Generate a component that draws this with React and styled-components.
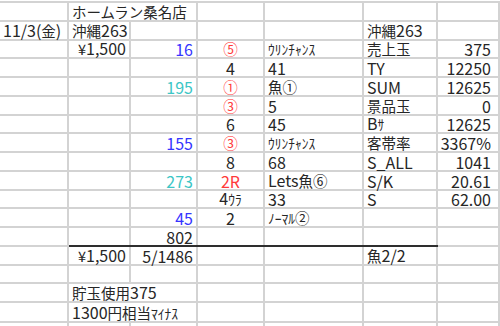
import React from 'react'
import styled, { createGlobalStyle } from 'styled-components'

const GlobalStyle = createGlobalStyle`
  body {
    margin: 0;
    background: #FFFFFF;
  }
`

// cell sizes without the 2px grid lines, which come from the sheet's gaps
const widths = [67, 60, 65, 65, 97, 72, 60]
const heights = [17, 17, 16, 17, 17, 17, 16, 17, 17, 17, 16, 17, 17, 17, 16, 17, 18, 10]

const BLUE = '#3535FF'
const CYAN = '#3CC6C6'
const RED = '#FF3A3A'
const LINE = '#D3D3D3'
const RULE = '#2E2E2E'

const Sheet = styled.div`
  display: grid;
  grid-template-columns: ${widths.map(w => w + 'px').join(' ')};
  grid-template-rows: ${heights.map(h => h + 'px').join(' ')};
  gap: 2px;
  margin-top: 1px;
  padding: 2px 2px 0 0;
  width: 500px;
  height: 325px;
  box-sizing: border-box;
  overflow: hidden;
  background: ${LINE};
  font-family: "Liberation Sans Narrow", "Noto Sans CJK JP", sans-serif;
  font-size: 16px;
  color: #262626;
`

const Cell = styled.div`
  position: relative;
  grid-column: span ${props => props.$span || 1};
  display: flex;
  align-items: flex-end;
  justify-content: ${props => props.$align === 'right' ? 'flex-end' : props.$align === 'center' ? 'center' : 'flex-start'};
  padding: 0 ${props => props.$pr || 3}px 0 3px;
  background: #FFFFFF;
  white-space: nowrap;
  color: ${props => props.$color || '#262626'};
  line-height: 16px;

  &::after {
    content: '';
    display: ${props => props.$thick ? 'block' : 'none'};
    position: absolute;
    left: 0;
    right: -2px;
    bottom: -2px;
    height: 2px;
    background: ${RULE};
  }
`

const Text = styled.span`
  display: inline-block;
  line-height: 16px;
`

const Wide = styled.span`
  font-family: "Noto Sans CJK JP", sans-serif;
  font-size: 14.5px;
`

const Kana = styled.span`
  font-family: "Noto Sans CJK JP", sans-serif;
  font-size: 13.5px;
`

// split a label into runs of ascii, half-width kana and other wide text
function Label({ text }) {
  const runs = []
  for (const ch of text) {
    const code = ch.codePointAt(0)
    const kind = code < 0x7f ? 'a' : code >= 0xff61 && code <= 0xff9f ? 'k' : 'w'
    const last = runs[runs.length - 1]
    if (last && last.kind === kind) last.text += ch
    else runs.push({ kind, text: ch })
  }
  return (
    <Text>
      {runs.map((run, i) => run.kind === 'a'
        ? <React.Fragment key={i}>{run.text}</React.Fragment>
        : run.kind === 'k'
          ? <Kana key={i}>{run.text}</Kana>
          : <Wide key={i}>{run.text}</Wide>)}
    </Text>
  )
}

// [col, text, opts]
const rows = [
  [[1, 'ホームラン桑名店', { span: 2 }]],
  [[0, '11/3(金)'], [1, '沖縄263'], [5, '沖縄263']],
  [[1, '¥1,500', { align: 'right' }], [2, '16', { align: 'right', color: BLUE }], [3, '⑤', { align: 'center', color: RED }], [4, 'ｳﾘﾝﾁｬﾝｽ'], [5, '売上玉'], [6, '375', { align: 'right', pr: 7 }]],
  [[3, '4', { align: 'center' }], [4, '41'], [5, 'TY'], [6, '12250', { align: 'right', pr: 7 }]],
  [[2, '195', { align: 'right', color: CYAN }], [3, '①', { align: 'center', color: RED }], [4, '魚①'], [5, 'SUM'], [6, '12625', { align: 'right', pr: 7 }]],
  [[3, '③', { align: 'center', color: RED }], [4, '5'], [5, '景品玉'], [6, '0', { align: 'right', pr: 7 }]],
  [[3, '6', { align: 'center' }], [4, '45'], [5, 'Bｻ'], [6, '12625', { align: 'right', pr: 7 }]],
  [[2, '155', { align: 'right', color: BLUE }], [3, '③', { align: 'center', color: RED }], [4, 'ｳﾘﾝﾁｬﾝｽ'], [5, '客帯率'], [6, '3367%', { align: 'right', pr: 7 }]],
  [[3, '8', { align: 'center' }], [4, '68'], [5, 'S_ALL'], [6, '1041', { align: 'right', pr: 7 }]],
  [[2, '273', { align: 'right', color: CYAN }], [3, '2R', { align: 'center', color: RED }], [4, 'Lets魚⑥'], [5, 'S/K'], [6, '20.61', { align: 'right', pr: 7 }]],
  [[3, '4ｳﾗ', { align: 'center' }], [4, '33'], [5, 'S'], [6, '62.00', { align: 'right', pr: 7 }]],
  [[2, '45', { align: 'right', color: BLUE }], [3, '2', { align: 'center' }], [4, 'ﾉｰﾏﾙ②']],
  [[2, '802', { align: 'right' }]],
  [[1, '¥1,500', { align: 'right' }], [2, '5/1486', { align: 'right' }], [5, '魚2/2']],
  [],
  [[1, '貯玉使用375', { span: 2 }]],
  [[1, '1300円相当ﾏｲﾅｽ', { span: 2 }]],
  [],
]

function buildRow(row, r) {
  const cells = []
  let c = 0
  while (c < widths.length) {
    const found = row.find(item => item[0] === c)
    const opts = (found && found[2]) || {}
    const span = opts.span || 1
    // row 12 carries the dark rule under columns B to F
    const thick = r === 12 && c >= 1 && c <= 5
    cells.push(
      <Cell
        key={`${r}-${c}`}
        $span={span}
        $align={opts.align}
        $color={opts.color}
        $pr={opts.pr}
        $thick={thick}
      >
        {found ? <Label text={found[1]} /> : null}
      </Cell>
    )
    c += span
  }
  return cells
}

export default function App() {
  return (
    <>
      <GlobalStyle />
      <Sheet>
        {rows.map((row, r) => buildRow(row, r))}
      </Sheet>
    </>
  )
}
